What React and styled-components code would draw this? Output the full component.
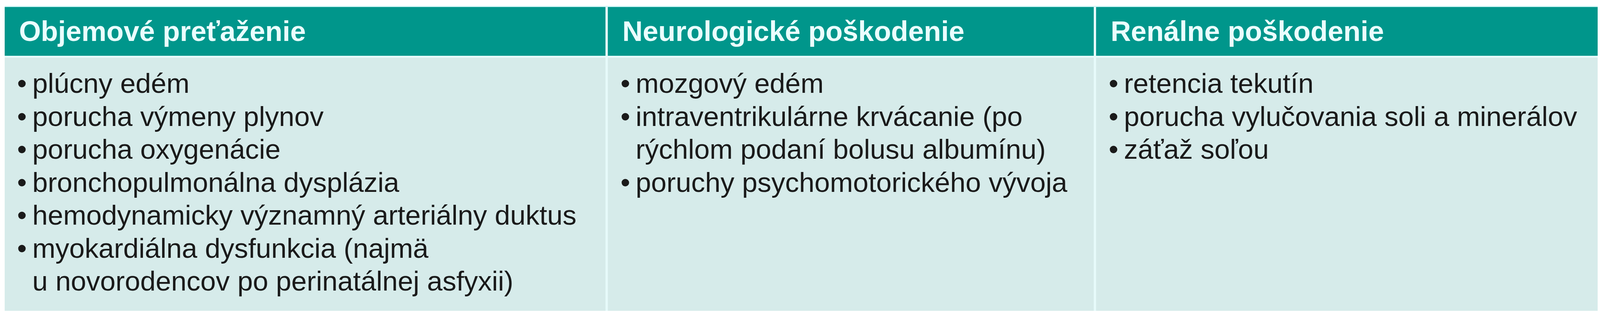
import React from "react";
import styled, { createGlobalStyle } from "styled-components";

// sizes are taken from a 4211px wide reference; scale them with the viewport
const u = (px) => `${((px / 4211) * 100).toFixed(4)}vw`;

const GlobalStyle = createGlobalStyle`
  html, body {
    margin: 0;
    padding: 0;
    background: #ffffff;
  }
  body {
    font-family: "Liberation Sans", Arial, sans-serif;
  }
`;

const Page = styled.div`
  width: 100vw;
  height: 800px;
  padding: 15px 0 0 ${u(12)};
  box-sizing: border-box;
  overflow: hidden;
`;

const Table = styled.div`
  display: grid;
  width: ${u(4193)};
  grid-template-columns: 1582fr 1279fr 1320fr;
  grid-template-rows: 125px 649px;
  column-gap: ${u(6)};
  row-gap: 5px;
  border-top: 3px solid #d2f6f6;
  background: #e6fafa;
`;

const HeadCell = styled.div`
  background: #00968b;
  color: #eafefe;
  font-weight: 700;
  font-size: ${u(74)};
  line-height: 125px;
  padding-left: ${u(38)};
  white-space: nowrap;
`;

const BodyCell = styled.ul`
  margin: 0;
  list-style: none;
  background: #d6ebea;
  padding: 24px ${u(20)} 0 ${u(33)};
  color: #1a1a1a;
  font-size: ${u(73)};
  line-height: 84.5px;
`;

const Item = styled.li`
  display: flex;
`;

const Marker = styled.span`
  flex: none;
  width: ${u(40)};
`;

const Text = styled.span`
  flex: 1;
`;

const columns = [
  {
    title: "Objemové preťaženie",
    items: [
      "plúcny edém",
      "porucha výmeny plynov",
      "porucha oxygenácie",
      "bronchopulmonálna dysplázia",
      "hemodynamicky významný arteriálny duktus",
      "myokardiálna dysfunkcia (najmä u\u00a0novorodencov po perinatálnej asfyxii)",
    ],
  },
  {
    title: "Neurologické poškodenie",
    items: [
      "mozgový edém",
      "intraventrikulárne krvácanie (po rýchlom podaní bolusu albumínu)",
      "poruchy psychomotorického vývoja",
    ],
  },
  {
    title: "Renálne poškodenie",
    items: [
      "retencia tekutín",
      "porucha vylučovania soli a minerálov",
      "záťaž soľou",
    ],
  },
];

export default function App() {
  return (
    <Page>
      <GlobalStyle />
      <Table>
        {columns.map((col) => (
          <HeadCell key={col.title}>{col.title}</HeadCell>
        ))}
        {columns.map((col) => (
          <BodyCell key={col.title + "-body"}>
            {col.items.map((item) => (
              <Item key={item}>
                <Marker>•</Marker>
                <Text>{item}</Text>
              </Item>
            ))}
          </BodyCell>
        ))}
      </Table>
    </Page>
  );
}
